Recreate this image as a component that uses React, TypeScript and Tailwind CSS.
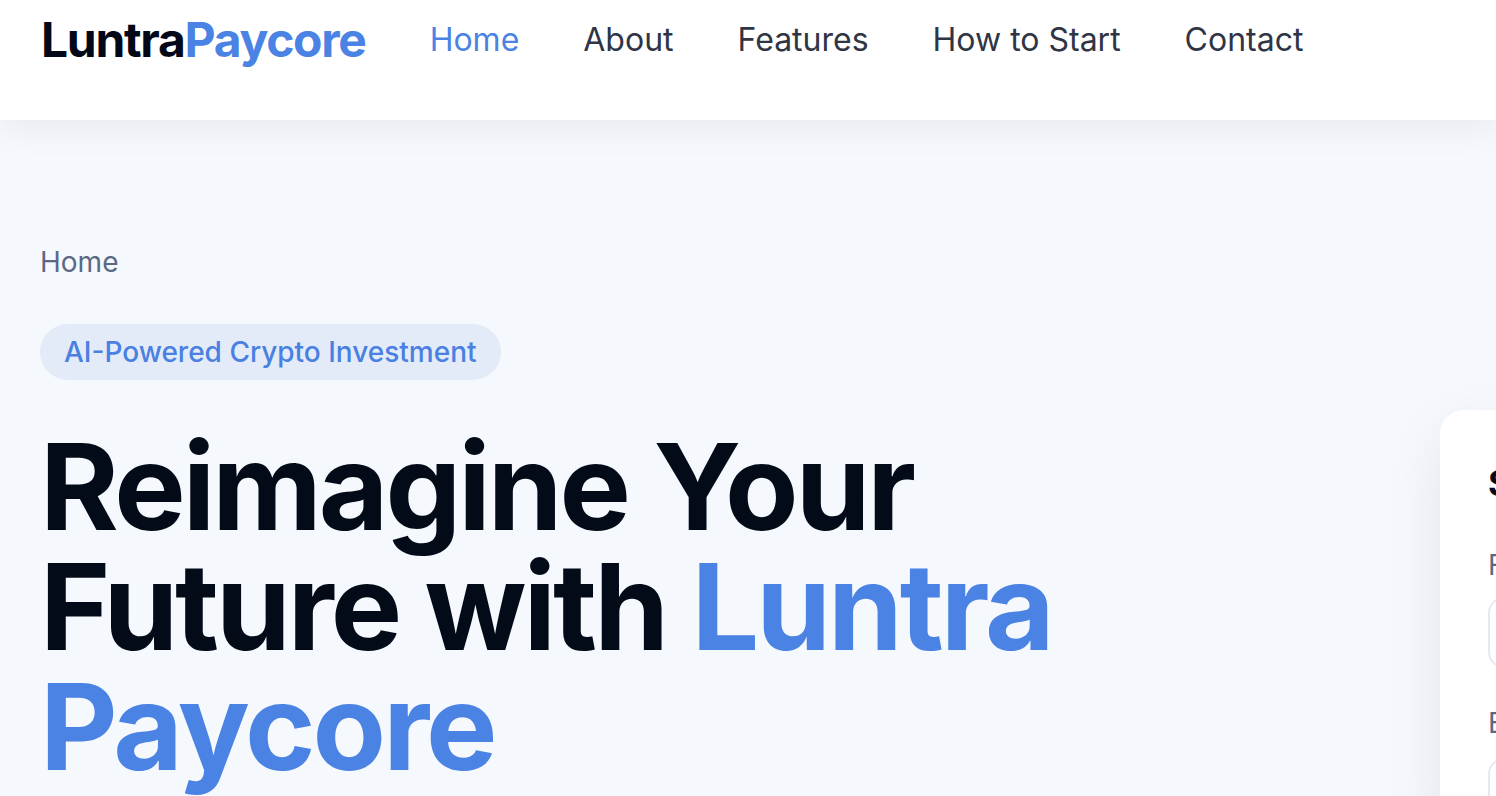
import React from "react";

export default function App() {
  const nav = ["Home", "About", "Features", "How to Start", "Contact"];
  return (
    <div
      className="w-[1496px] h-[796px] overflow-hidden bg-[#f5f8fc] text-[#020817]"
      style={{ fontFamily: "Inter, 'Noto Sans', sans-serif" }}
    >
      <header className="relative z-10 h-[120px] bg-white shadow-[0_6px_36px_rgba(15,23,42,0.07)]">
        <div className="flex h-20 items-center gap-16 px-[41px]">
          <div className="text-[48px] font-bold leading-none tracking-[-0.027em]">
            <span className="text-[#020817]">Luntra</span>
            <span className="text-[#4a83e4]">Paycore</span>
          </div>
          <nav className="flex items-center gap-16 text-[32px] leading-none">
            {nav.map((n, i) => (
              <a
                key={n}
                className={i === 0 ? "text-[#4a83e4]" : "text-[#2f3545]"}
              >
                {n}
              </a>
            ))}
          </nav>
        </div>
      </header>

      <main className="pl-10 pt-[122px]">
        <div className="text-[28px] leading-[40px] text-[#5b6885]">Home</div>
        <div className="mt-[42px] flex gap-20">
          <div className="w-[1320px] shrink-0">
            <div className="inline-flex h-14 items-center rounded-full bg-[#e3ebf8] px-6 text-[28px] font-medium text-[#4a80e2]">
              AI-Powered Crypto Investment
            </div>
            <h1 className="mt-[47px] max-w-[1100px] text-[120px] font-bold leading-[120px] tracking-[-0.025em] text-[#030a18]">
              Reimagine Your Future with{" "}
              <span className="text-[#4a83e4]">Luntra Paycore</span>
            </h1>
          </div>
          <div className="mt-[86px] w-[560px] shrink-0 rounded-[24px] bg-white px-12 pt-[53px] shadow-[0_20px_60px_rgba(15,23,42,0.08)]">
            <h2 className="text-[36px] font-bold leading-[40px] text-[#030a18]">
              Start Investing
            </h2>
            <div className="mt-[42px] text-[28px] leading-[40px] text-[#5b6885]">
              Full Name
            </div>
            <div className="mt-3 h-[71px] rounded-2xl border-2 border-[#e5eaf1] bg-white" />
            <div className="mt-[35px] text-[28px] leading-[40px] text-[#5b6885]">
              Email
            </div>
            <div className="mt-[15px] h-[71px] rounded-2xl border-2 border-[#e5eaf1] bg-white" />
          </div>
        </div>
      </main>
    </div>
  );
}
